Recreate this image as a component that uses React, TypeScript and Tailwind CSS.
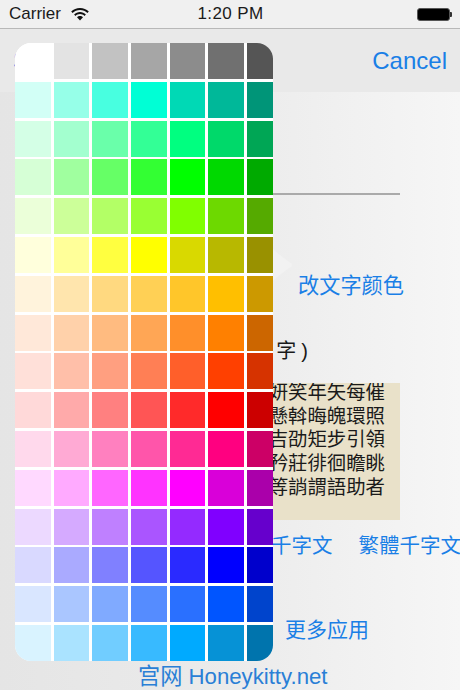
import React from 'react';

const swatches: string[][] = [
  ['#ffffff', '#e3e3e3', '#c2c2c2', '#a6a6a6', '#8c8c8c', '#707070', '#555555'],
  ['#d2fff6', '#96ffe8', '#48ffe0', '#00ffd5', '#00d9b5', '#00b899', '#009578'],
  ['#d4ffe6', '#a3ffcf', '#6affaa', '#33ff96', '#00ff80', '#00d96a', '#00a655'],
  ['#d6ffd6', '#a0ff9f', '#66ff66', '#33ff33', '#00ff00', '#00d900', '#00aa00'],
  ['#ebffd9', '#ccff99', '#b3ff66', '#99ff33', '#80ff00', '#6dd900', '#55aa00'],
  ['#ffffdc', '#ffff99', '#ffff40', '#ffff00', '#d9d900', '#b8b800', '#999100'],
  ['#fff3dc', '#ffe5ad', '#ffd980', '#ffd055', '#ffc62a', '#ffbf00', '#cc9900'],
  ['#ffe8d9', '#ffd1aa', '#ffbb80', '#ffa655', '#ff8f2a', '#ff8000', '#cc6600'],
  ['#ffe0d9', '#ffbfa9', '#ff9f80', '#ff7f55', '#ff5f2a', '#ff4000', '#d63300'],
  ['#ffd9d9', '#ffaaaa', '#ff8080', '#ff5555', '#ff2a2a', '#ff0000', '#cc0000'],
  ['#ffd9ec', '#ffaad4', '#ff80bf', '#ff55aa', '#ff2a94', '#ff0080', '#cc0066'],
  ['#ffd9ff', '#ffaaff', '#ff66ff', '#ff33ff', '#ff00ff', '#d900d9', '#aa00aa'],
  ['#ecd9ff', '#d5aaff', '#bf80ff', '#aa55ff', '#942aff', '#8000ff', '#6600cc'],
  ['#d9d9ff', '#aaaaff', '#8080ff', '#5555ff', '#2a2aff', '#0000ff', '#0000cc'],
  ['#d9e6ff', '#aac6ff', '#80aaff', '#558cff', '#2a70ff', '#0055ff', '#0044cc'],
  ['#d9f3ff', '#aae3ff', '#71cdff', '#38baff', '#00aaff', '#0692d6', '#0074ad'],
];

const poem = [
  '毛施淑姿工嚬妍笑年矢每催',
  '曦暉朗曜璇璣懸斡晦魄環照',
  '指薪修祜永綏吉劭矩步引領',
  '俯仰廊廟束帶矜莊徘徊瞻眺',
  '孤陋寡聞愚蒙等誚謂語助者',
];

const latin = "font-['Liberation_Sans','Noto_Sans_CJK_SC',sans-serif]";

const StatusBar: React.FC = () => (
  <div className="h-[29px] bg-[#f0f0f0] border-b border-[#b8b8b8] flex items-center justify-between pl-[9px] pr-[8px] text-[17px] text-[#1a1a1a]">
    <div className="flex items-center gap-[10px] w-[120px]">
      <span>Carrier</span>
      <svg width="18" height="13" viewBox="0 0 18 13" fill="#111">
        <path d="M9 0C5.6 0 2.5 1.3 0.2 3.5L1.6 5C3.5 3.1 6.1 2 9 2s5.5 1.1 7.4 3l1.4-1.5C15.5 1.3 12.4 0 9 0z" />
        <path d="M9 4C6.7 4 4.7 4.9 3.1 6.4L4.5 7.9C5.7 6.7 7.3 6 9 6s3.3.7 4.5 1.9l1.4-1.5C13.3 4.9 11.3 4 9 4z" />
        <path d="M9 8C7.8 8 6.8 8.5 6 9.3L9 12.6l3-3.3C11.2 8.5 10.2 8 9 8z" />
      </svg>
    </div>
    <span className="font-medium tracking-[0.4px]">1:20 PM</span>
    <div className="w-[120px] flex justify-end items-center">
      <div className="w-[33px] h-[13px] rounded-[3px] bg-black border border-[#555]" />
      <div className="w-[2px] h-[5px] bg-[#333] rounded-r-[1px]" />
    </div>
  </div>
);

const Swatches: React.FC = () => (
  <div className="absolute left-[15px] top-[43px] w-[258px] h-[618px] rounded-[16px] overflow-hidden bg-white grid grid-cols-[repeat(6,35.7px)_26px] gap-x-[3px] gap-y-[2.7px]">
    {swatches.flat().map((color, i) => (
      <div key={i} className="h-[36.1px]" style={{ backgroundColor: color }} />
    ))}
  </div>
);

export default function App() {
  return (
    <div className={`relative w-[460px] h-[690px] overflow-hidden bg-gradient-to-r from-[#e5e5e5] via-[#ebebeb] to-[#f6f6f6] ${latin}`}>
      <StatusBar />

      <div className="h-[63px] bg-[#e9e9e9] flex items-center justify-between pl-[13px] pr-[13px] text-[24px] text-[#1a7fe6]">
        <span>Save</span>
        <span>Cancel</span>
      </div>

      <div className="flex flex-col pl-[60px] pr-[60px]">
        <div className="mt-[101px] h-[2px] bg-[#aaaaaa]" />
        <div className="mt-[78px] h-[26px] leading-[26px] text-right text-[21.2px] text-[#1a7fe6] mr-[-4px]">改文字颜色</div>
        <div className="mt-[39px] h-[26px] leading-[26px] text-[20px] text-[#1a1a1a] text-right mr-[92px] whitespace-nowrap">
          千字文 (繁体<span className="ml-[6px] mr-[5px]">字</span>)
        </div>
        <div className="mt-[19px] h-[137px] bg-[#e9e1c9] overflow-hidden pr-[15px] text-[19.4px] leading-[23.7px] text-[#1a1a1a] font-['Noto_Sans_CJK_TC',sans-serif]">
          <div className="mt-[-4px] text-right whitespace-nowrap">
            {poem.map((line) => (
              <div key={line}>{line}</div>
            ))}
          </div>
        </div>
      </div>

      <div className="flex items-center justify-end mt-[13px] h-[26px] text-[20.5px] text-[#1a7fe6] whitespace-nowrap gap-[26px] mr-[-1px]">
        <span>简体千字文</span>
        <span>繁體千字文</span>
      </div>

      <div className="mt-[58px] h-[26px] leading-[26px] text-[21px] text-[#1a7fe6] pl-[285px]">更多应用</div>

      <div className="mt-[21px] h-[26px] leading-[26px] text-[22.2px] text-[#2a7fd6] pl-[138px] whitespace-nowrap">宫网 Honeykitty.net</div>

      <Swatches />
      <svg className="absolute left-[273px] top-[249px]" width="20" height="32" viewBox="0 0 20 32">
        <path d="M0 0C3 3 14 12 18 14c1.4.8 1.4 3 0 4C14 20 3 29 0 32z" fill="#f2f2f2" />
      </svg>
    </div>
  );
}
